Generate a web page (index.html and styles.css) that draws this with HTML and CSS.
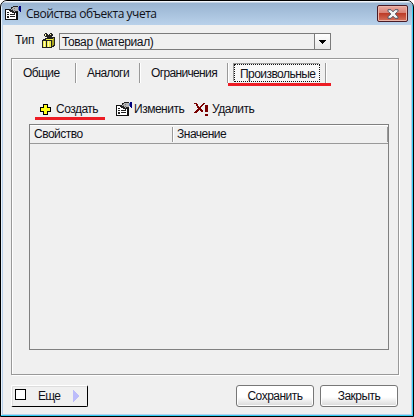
FILE: index.html
```html
<!DOCTYPE html>
<html lang="ru">
<head>
<meta charset="utf-8">
<title>Свойства объекта учета</title>
<link rel="stylesheet" href="styles.css">
</head>
<body>
<svg class="defs" width="0" height="0">
  <symbol id="props" viewBox="0 0 16 16">
    <path fill="#111" d="M0 4h13v11H0z"/><path fill="#fff" d="M1 5h10v9H1z"/>
    <path fill="#222" d="M2 7h2v1H2zM2 9h2v1H2zM5 9h5v1H5zM2 11h2v1H2zM5 11h5v1H5zM2 13h2v-1H2z"/>
    <path fill="#222" d="M4 4h2V2h2V1h5v6h-2v1h-1v1H9V8H7V7H5V6H4z"/>
    <path fill="#b4b4b4" d="M8 2h5v4h-3v1H9V6H8V5H6V4h1V3h1z"/>
    <path fill="#777" d="M7 4h1v1H7zM9 3h1v1H9zM9 5h1v1H9z"/>
    <path fill="#00007c" d="M14 1h2v6h-1V6h-1z"/><path fill="#4c6fb0" d="M13 2h1v3h-1z"/>
  </symbol>
</svg>
<main class="window">
  <header class="titlebar">
    <svg class="app-icon" width="16" height="16"><use href="#props"/></svg>
    <h1>Свойства объекта учета</h1>
    <button class="close" aria-label="Закрыть окно">
      <svg width="12" height="10" viewBox="0 0 12 10"><path d="M1 .7h3l2 2.1L8 .7h3v1.5L8.2 5 11 7.8v1.5H8L6 7.2 4 9.3H1V7.8L3.8 5 1 2.2z" fill="#f5f5f5" stroke="#515868"/></svg>
    </button>
  </header>
  <div class="client">
    <div class="type-row">
      <label>Тип</label>
      <svg class="gift" width="13" height="15" viewBox="0 0 13 15">
        <path fill="#222" d="M3 0h2v1h1v1h1V1h1V0h2v1h1v2h-1v1h3v9h-1v1h-2v1H0V7h1V6h2V5h2V4H3V3H2V1h1z"/>
        <path fill="#f1ef4a" d="M1 8h3v6H1zM5 8h4v6H5zM4 6h7v1H4z"/>
        <path fill="#a9a420" d="M10 7h1v6h-1zM11 5h1v7h-1z"/>
        <path fill="#fffbb5" d="M2 8h1v6H2zM6 8h1v6H6zM3 1h1v2H3zM8 1h1v1H8z"/>
      </svg>
      <div class="combo"><span>Товар (материал)</span><i><svg width="7" height="4"><path d="M0 0h7v1H6v1H5v1H4v1H3V3H2V2H1V1H0z"/></svg></i></div>
    </div>
    <section class="panel">
      <nav class="tabs">
        <div class="tab t1"><span>Общие</span></div>
        <div class="tab t2"><span>Аналоги</span></div>
        <div class="tab t3"><span>Ограничения</span></div>
        <div class="tab t4"><span class="selected">Произвольные</span></div>
      </nav>
      <div class="tab-line"></div>
      <div class="toolbar">
        <div class="tool create">
          <svg width="11" height="11"><path fill="#000" d="M3 0h5v3h3v5H8v3H3V8H0V3h3z"/><path fill="#ffff1a" d="M4 1h3v3h3v3H7v3H4V7H1V4h3z"/></svg>
          <span>Создать</span>
        </div>
        <div class="tool edit"><svg width="16" height="16"><use href="#props"/></svg><span>Изменить</span></div>
        <div class="tool delete">
          <svg width="15" height="14"><path fill="#780000" d="M0 1h3v1h1v2h1v1h1V4h1V3h1V2h1V1h2v1h-1v1H9v1H8v1H7v2h1v1h1v2H7V9H6V8H5v1H4v1H3v1H0v-1h1V9h1V8h1V7h1V6H3V4H2V2H0zM11 3h3v7h-3zM11 12h3v2h-3z"/></svg>
          <span>Удалить</span>
        </div>
      </div>
      <div class="create-line"></div>
      <div class="table">
        <div class="thead"><div class="th first">Свойство</div><div class="th last">Значение</div></div>
      </div>
    </section>
    <footer>
      <button class="more"><i class="box"></i><span>Еще</span><svg width="6" height="12"><path fill="#bcbcfa" d="M0 0l6 6-6 6z"/></svg></button>
      <button class="btn save">Сохранить</button>
      <button class="btn">Закрыть</button>
    </footer>
  </div>
</main>
</body>
</html>
```
FILE: styles.css
```css
* { box-sizing: border-box; }
body { margin: 0; background: #fff; overflow: hidden; font: 12px/16px "Liberation Sans", Arial, sans-serif; letter-spacing: -.5px; color: #101018; }
.defs { display: block; }
svg { display: block; flex: none; shape-rendering: crispEdges; }
button { font: inherit; letter-spacing: inherit; color: inherit; padding: 0; }
.window { width: 414px; height: 417px; border: 1px solid #000; border-radius: 7px 7px 0 0; background: #b9d0ea; overflow: hidden; padding: 0 2px 2px; box-shadow: inset -1px -1px #35cdf2, inset 1px 1px #e8f2fb; }
.titlebar { height: 24px; margin: 0 -1px; background: linear-gradient(#f1f5fa 0 1px, #99b4d1 2px, #b9d1ea); display: flex; align-items: flex-start; padding-left: 3px; }
.app-icon { margin-top: 4px; }
h1 { margin: 5px 0 0 5px; font: 12px/16px "Open Sans", "Noto Sans", sans-serif; letter-spacing: -.46px; white-space: nowrap; flex: 1; }
.close { width: 31px; height: 17px; margin: 4px 4px 0 0; border: 1px solid #481b26; border-radius: 2px; background: linear-gradient(#e9aaa0, #d98175 45%, #bd3c28 50%, #d4715c); box-shadow: inset 0 0 0 1px #ecb5a9; display: flex; align-items: center; justify-content: center; }
.close svg { shape-rendering: auto; }
.client { height: 389px; background: #f0f0f0; overflow: hidden; padding: 8px 0 0 8px; }
.type-row { display: flex; height: 18px; padding-left: 4px; }
.type-row label { width: 27px; line-height: 15px; letter-spacing: -.2px; }
.gift { margin-top: 0; }
.combo { margin-left: 4px; width: 272px; height: 17px; border: 1px solid #7b7b7b; display: flex; justify-content: space-between; line-height: 16px; padding-left: 2px; letter-spacing: -.4px; }
.combo i { width: 16px; border-left: 1px solid #7b7b7b; background: linear-gradient(#fff, #e8e8e8); display: flex; align-items: center; justify-content: center; }
.panel { width: 388px; height: 317px; margin-top: 7px; border: 1px solid #999; box-shadow: inset 1px 1px #fff, 1px 1px #fff; padding: 4px 0 0 17px; }
.tabs { display: flex; height: 20px; margin-left: -17px; }
.tab { border-right: 1px solid #999; box-shadow: 1px 0 #fff; line-height: 20px; height: 20px; white-space: nowrap; }
.t1, .t2 { width: 64px; padding-left: 11px; }
.t1, .t2 { letter-spacing: -.6px; }
.t3 { width: 88px; padding-left: 11px; letter-spacing: -.65px; }
.t4 { width: 98px; padding: 1px 0 0 6px; }
.selected { display: block; width: 86px; height: 18px; border: 1px dotted #111; box-shadow: -1px -1px #999; background: #f8f8f8; line-height: 19px; padding-left: 5px; letter-spacing: -.55px; }
.tab-line { width: 103px; height: 3px; margin: 0 0 0 199px; background: #ed1c24; }
.toolbar { display: flex; height: 17px; margin-top: 15px; }
.tool { display: flex; line-height: 16px; white-space: nowrap; }
.create { width: 87px; padding-left: 11px; }
.create svg { margin: 3px 5px 0 0; }
.edit { width: 78px; }
.edit svg { margin-right: 2px; }
.delete svg { margin: 1px 3px 0 0; }
.create-line { width: 70px; height: 3px; margin: -1px 0 0 6px; background: #ed1c24; }
.table { width: 360px; height: 226px; margin-top: 4px; border: 1px solid #808080; }
.thead { display: flex; height: 19px; border-bottom: 1px solid #999; box-shadow: inset 0 1px #fff; line-height: 14px; padding: 2px 0 1px; }
.th { flex: 1; padding-left: 4px; border-right: 1px solid #999; }
.first { flex: 0 0 143px; }
.last { box-shadow: inset 1px 0 #fff; }
footer { display: flex; margin-top: 10px; height: 23px; align-items: flex-start; }
.more { width: 77px; height: 22px; background: #f0f0f0; border: 1px solid; border-color: #fff #000 #000 #fff; border-radius: 2px; box-shadow: inset 1px 1px #ddd; display: flex; align-items: center; }
.box { width: 11px; height: 11px; border: 1px solid #000; background: #fff; margin: -3px 12px 0 3px; }
.more span { width: 35px; text-align: left; letter-spacing: -.7px; }
.btn { width: 78px; height: 22px; border: 1px solid #777; border-radius: 3px; background: linear-gradient(#fff 55%, #d8d8d8); box-shadow: inset 0 0 0 1px #fff; margin-left: 6px; text-align: center; }
.save { margin-left: 148px; }
```
